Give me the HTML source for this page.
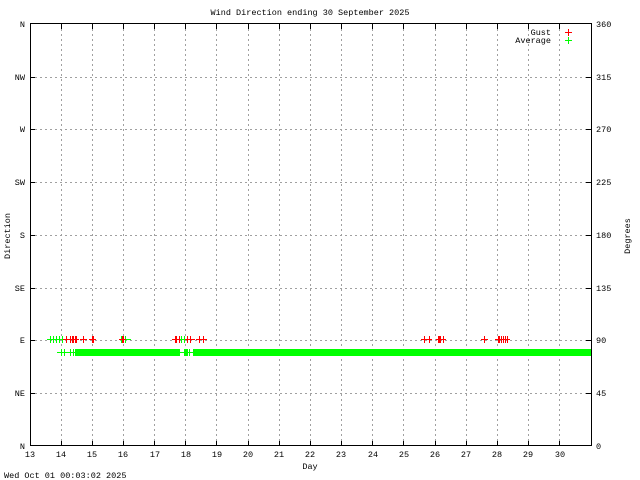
<!DOCTYPE html>
<html><head><meta charset="utf-8"><style>
html,body{margin:0;padding:0;background:#fff;width:640px;height:480px;overflow:hidden}
svg{display:block}
text{font-family:"Liberation Mono","DejaVu Sans Mono",monospace;font-size:8.5px;fill:#000}
</style></head><body>
<svg width="640" height="480" viewBox="0 0 640 480" shape-rendering="crispEdges">
<g stroke="#a0a0a0" stroke-dasharray="2,3" stroke-width="1">
<line x1="61.5" y1="24" x2="61.5" y2="446"/><line x1="92.5" y1="24" x2="92.5" y2="446"/>
<line x1="123.5" y1="24" x2="123.5" y2="446"/><line x1="154.5" y1="24" x2="154.5" y2="446"/>
<line x1="185.5" y1="24" x2="185.5" y2="446"/><line x1="216.5" y1="24" x2="216.5" y2="446"/>
<line x1="248.5" y1="24" x2="248.5" y2="446"/><line x1="279.5" y1="24" x2="279.5" y2="446"/>
<line x1="310.5" y1="24" x2="310.5" y2="446"/><line x1="341.5" y1="24" x2="341.5" y2="446"/>
<line x1="372.5" y1="24" x2="372.5" y2="446"/><line x1="403.5" y1="24" x2="403.5" y2="446"/>
<line x1="435.5" y1="24" x2="435.5" y2="446"/><line x1="466.5" y1="24" x2="466.5" y2="446"/>
<line x1="497.5" y1="24" x2="497.5" y2="446"/><line x1="528.5" y1="24" x2="528.5" y2="446"/>
<line x1="559.5" y1="24" x2="559.5" y2="446"/>
<line x1="30" y1="77.5" x2="591" y2="77.5"/><line x1="30" y1="129.5" x2="591" y2="129.5"/>
<line x1="30" y1="182.5" x2="591" y2="182.5"/><line x1="30" y1="235.5" x2="591" y2="235.5"/>
<line x1="30" y1="288.5" x2="591" y2="288.5"/><line x1="30" y1="340.5" x2="591" y2="340.5"/>
<line x1="30" y1="393.5" x2="591" y2="393.5"/>
</g>
<rect x="30.5" y="23.5" width="561" height="422" fill="none" stroke="#000"/>
<g stroke="#000">
<path d="M30 77.5h5M30 129.5h5M30 182.5h5M30 235.5h5M30 288.5h5M30 340.5h5M30 393.5h5M586 77.5h5M586 129.5h5M586 182.5h5M586 235.5h5M586 288.5h5M586 340.5h5M586 393.5h5"/>
<path d="M61.5 24v5M92.5 24v5M123.5 24v5M154.5 24v5M185.5 24v5M216.5 24v5M248.5 24v5M279.5 24v5M310.5 24v5M341.5 24v5M372.5 24v5M403.5 24v5M435.5 24v5M466.5 24v5M497.5 24v5M528.5 24v5M559.5 24v5"/>
<path d="M61.5 446v-5M92.5 446v-5M123.5 446v-5M154.5 446v-5M185.5 446v-5M216.5 446v-5M248.5 446v-5M279.5 446v-5M310.5 446v-5M341.5 446v-5M372.5 446v-5M403.5 446v-5M435.5 446v-5M466.5 446v-5M497.5 446v-5M528.5 446v-5M559.5 446v-5"/>
</g>
<!-- average band -->
<g fill="#00ff00">
<rect x="57" y="352" width="534" height="1"/>
<rect x="61" y="349" width="1" height="7"/><rect x="64" y="349" width="1" height="7"/>
<rect x="70" y="349" width="1" height="7"/><rect x="73" y="349" width="1" height="7"/>
<rect x="189" y="349" width="1" height="7"/>
<rect x="75" y="349" width="105" height="7"/>
<rect x="184" y="349" width="4" height="7"/>
<rect x="193" y="349" width="398" height="7"/>
<!-- green at E -->
<rect x="47" y="339" width="30" height="1"/><rect x="119" y="339" width="12" height="1"/><rect x="175" y="339" width="16" height="1"/>
<rect x="50" y="336" width="1" height="7"/><rect x="53" y="336" width="1" height="7"/><rect x="56" y="336" width="1" height="7"/>
<rect x="59" y="336" width="1" height="7"/><rect x="62" y="336" width="1" height="7"/><rect x="121" y="336" width="1" height="7"/>
<rect x="125" y="336" width="1" height="7"/><rect x="181" y="336" width="1" height="7"/><rect x="184" y="336" width="1" height="7"/>
<rect x="565" y="40" width="7" height="1"/><rect x="568" y="37" width="1" height="7"/>
</g>
<g fill="#ff0000">
<rect x="63" y="339" width="16" height="1"/><rect x="80" y="339" width="7" height="1"/><rect x="89" y="339" width="7" height="1"/>
<rect x="119" y="339" width="7" height="1"/><rect x="172" y="339" width="8" height="1"/><rect x="185" y="339" width="10" height="1"/>
<rect x="196" y="339" width="11" height="1"/><rect x="421" y="339" width="11" height="1"/><rect x="436" y="339" width="10" height="1"/>
<rect x="481" y="339" width="7" height="1"/><rect x="495" y="339" width="15" height="1"/>
<rect x="66" y="336" width="1" height="7"/><rect x="70" y="336" width="1" height="7"/><rect x="72" y="336" width="2" height="7"/>
<rect x="75" y="336" width="2" height="7"/><rect x="83" y="336" width="1" height="7"/><rect x="92" y="336" width="2" height="7"/>
<rect x="122" y="336" width="2" height="7"/><rect x="175" y="336" width="2" height="7"/><rect x="179" y="336" width="1" height="7"/>
<rect x="187" y="336" width="1" height="7"/><rect x="190" y="336" width="1" height="7"/><rect x="199" y="336" width="1" height="7"/>
<rect x="203" y="336" width="1" height="7"/><rect x="424" y="336" width="1" height="7"/><rect x="429" y="336" width="1" height="7"/>
<rect x="438" y="336" width="3" height="7"/><rect x="443" y="336" width="1" height="7"/><rect x="484" y="336" width="1" height="7"/>
<rect x="498" y="336" width="2" height="7"/><rect x="501" y="336" width="1" height="7"/><rect x="503" y="336" width="1" height="7"/>
<rect x="505" y="336" width="1" height="7"/><rect x="507" y="336" width="1" height="7"/>
<rect x="565" y="32" width="7" height="1"/><rect x="568" y="29" width="1" height="7"/>
</g>
<text x="310" y="15" text-anchor="middle">Wind Direction ending 30 September 2025</text>
<text x="551" y="35" text-anchor="end">Gust</text>
<text x="551" y="43" text-anchor="end">Average</text>
<g text-anchor="end">
<text x="25" y="27">N</text><text x="25" y="80">NW</text><text x="25" y="132">W</text>
<text x="25" y="185">SW</text><text x="25" y="238">S</text><text x="25" y="291">SE</text>
<text x="25" y="343">E</text><text x="25" y="396">NE</text><text x="25" y="449">N</text>
</g>
<g>
<text x="596" y="27">360</text><text x="596" y="80">315</text><text x="596" y="132">270</text>
<text x="596" y="185">225</text><text x="596" y="238">180</text><text x="596" y="291">135</text>
<text x="596" y="343">90</text><text x="596" y="396">45</text><text x="596" y="449">0</text>
</g>
<g text-anchor="middle">
<text x="30" y="457">13</text><text x="61" y="457">14</text><text x="92" y="457">15</text>
<text x="123" y="457">16</text><text x="155" y="457">17</text><text x="186" y="457">18</text>
<text x="217" y="457">19</text><text x="248" y="457">20</text><text x="279" y="457">21</text>
<text x="310" y="457">22</text><text x="341" y="457">23</text><text x="373" y="457">24</text>
<text x="404" y="457">25</text><text x="435" y="457">26</text><text x="466" y="457">27</text>
<text x="497" y="457">28</text><text x="528" y="457">29</text><text x="560" y="457">30</text>
<text x="310" y="469">Day</text>
</g>
<text x="0" y="0" text-anchor="middle" transform="translate(10,236) rotate(-90)">Direction</text>
<text x="0" y="0" text-anchor="middle" transform="translate(630,236) rotate(-90)">Degrees</text>
<text x="4" y="478">Wed Oct 01 00:03:02 2025</text>
</svg>
</body></html>
